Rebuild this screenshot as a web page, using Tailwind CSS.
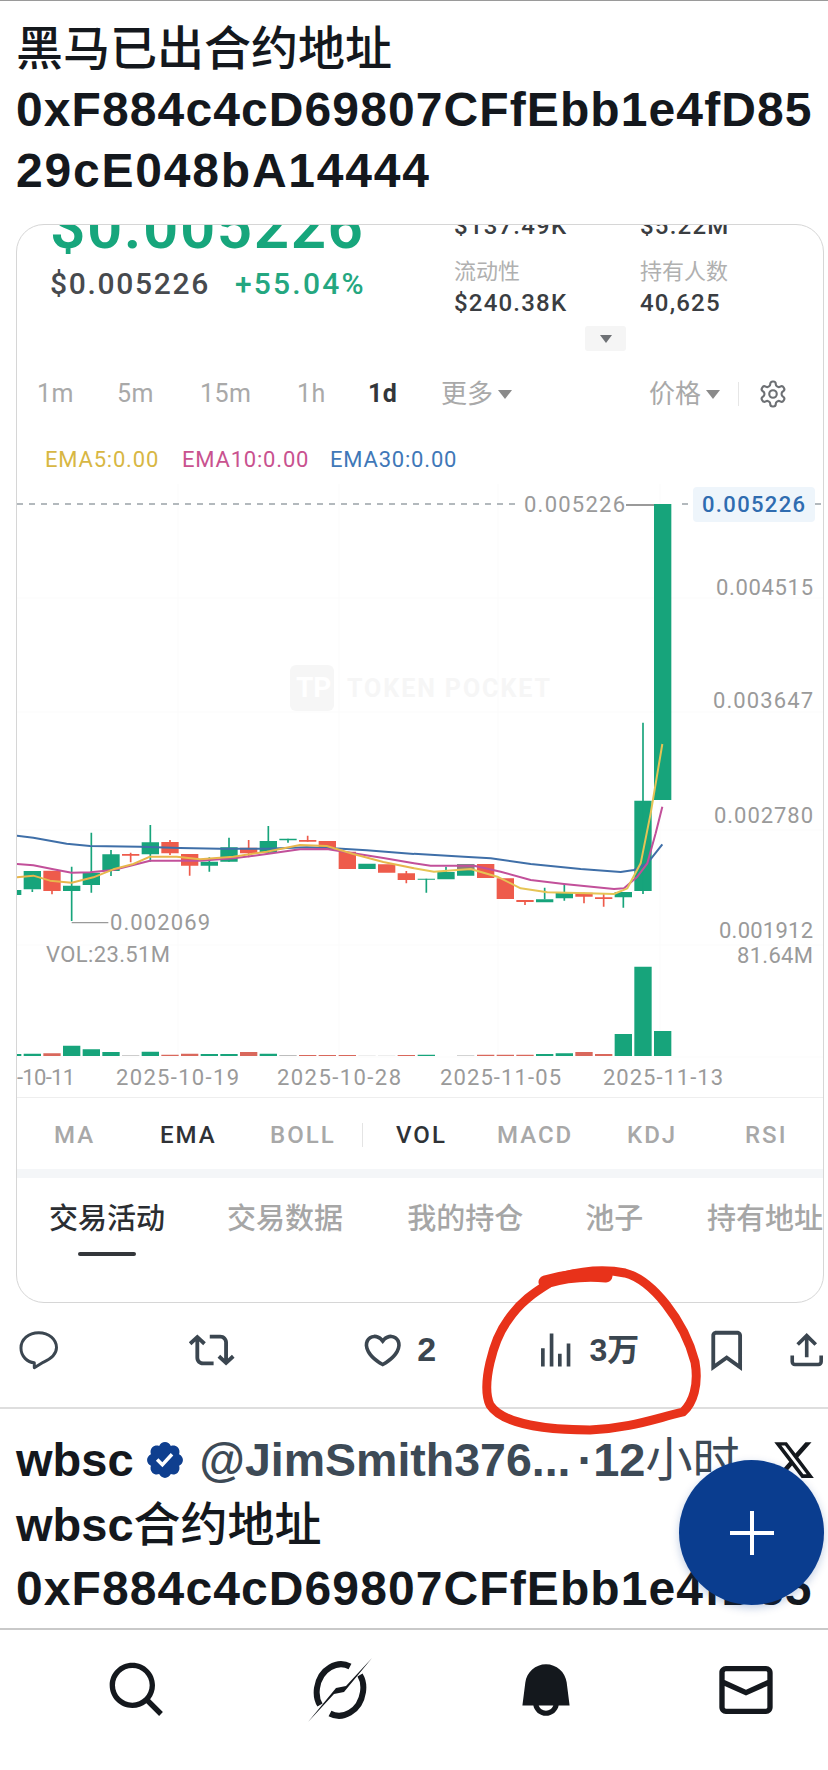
<!DOCTYPE html>
<html lang="zh-CN">
<head>
<meta charset="utf-8">
<title>Tweet screenshot</title>
<script src="https://cdn.jsdelivr.net/npm/@tailwindcss/browser@4"></script>
</head>
<body class="m-0 bg-white">
<div class="relative w-[828px] h-[1770px] overflow-hidden bg-white text-[#14181d] font-['Roboto','Noto_Sans_CJK_SC',sans-serif]">
  <div class="h-px bg-[#9a9a9a]"></div>

  <!-- tweet text -->
  <div class="pl-[16px] pt-[17px] h-[223px] font-['Liberation_Sans','Noto_Sans_CJK_SC',sans-serif] font-bold text-[48px] leading-[61px] tracking-[1.1px]">
    <div class="font-medium text-[47px] tracking-[0px]">黑马已出合约地址</div>
    <div class="whitespace-nowrap">0xF884c4cD69807CFfEbb1e4fD85</div>
    <div class="whitespace-nowrap tracking-[1.8px]">29cE048bA14444</div>
  </div>

  <!-- embedded card -->
  <div class="ml-[16px] w-[808px] h-[1079px] box-border border border-[#d6d6d6] rounded-[28px] overflow-hidden">
    <div class="flex h-[145px]">
      <div class="w-[437px] pl-[33px]">
        <div class="text-[62px] leading-[62px] -mt-[29px] font-semibold text-[#17a67c] tracking-[1.5px] whitespace-nowrap">$0.005226</div>
        <div class="flex mt-[8px] text-[30px] leading-[36px] font-medium tracking-[1.7px]">
          <span class="text-[#474a4e] w-[185px]">$0.005226</span>
          <span class="text-[#24a780] tracking-[2.2px]">+55.04%</span>
        </div>
      </div>
      <div class="relative w-[369px]">
        <div class="grid grid-cols-[186px_160px] text-[24px] font-medium text-[#3a3d41] -mt-[12px] tracking-[1.2px]">
          <div class="leading-[26px]">$137.49K</div>
          <div class="leading-[26px]">$5.22M</div>
          <div class="mt-[18px] leading-[30px] text-[22px] tracking-[0px] text-[#b0b0b0] font-normal">流动性</div>
          <div class="mt-[18px] leading-[30px] text-[22px] tracking-[0px] text-[#b0b0b0] font-normal">持有人数</div>
          <div class="mt-[2px] leading-[28px]">$240.38K</div>
          <div class="mt-[2px] leading-[28px]">40,625</div>
        </div>
        <div class="flex items-center justify-center w-[41px] h-[25px] ml-[131px] mt-[9px] bg-[#f5f5f5] rounded-[3px]">
          <svg width="12" height="8" viewBox="0 0 12 8"><path d="M0 0h12L6 8z" fill="#6e7175"/></svg>
        </div>
      </div>
    </div>

    <!-- time frames -->
    <div class="flex items-center h-[46px] pt-[2px] text-[25px] tracking-[0.5px] text-[#a9a9a9]">
      <span class="ml-[20px] w-[80px]">1m</span>
      <span class="w-[83px]">5m</span>
      <span class="w-[97px]">15m</span>
      <span class="w-[71px]">1h</span>
      <span class="w-[73px] font-bold text-[#33363a]">1d</span>
      <span class="flex items-center w-[208px] text-[26px] tracking-[0px]">更多<svg class="ml-[5px]" width="14" height="9" viewBox="0 0 14 9"><path d="M0 0h14L7 9z" fill="#8a8a8a"/></svg></span>
      <span class="flex items-center w-[89px] text-[26px] tracking-[0px]">价格<svg class="ml-[5px]" width="14" height="9" viewBox="0 0 14 9"><path d="M0 0h14L7 9z" fill="#8a8a8a"/></svg></span>
      <span class="w-px h-[24px] bg-[#e6e6e6] mr-[19px]"></span>
      <svg width="30" height="32" viewBox="0 0 24 24" fill="none" stroke="#6d7074" stroke-width="1.7" stroke-linecap="round" stroke-linejoin="round"><path d="M12.22 2h-.44a2 2 0 0 0-2 2v.18a2 2 0 0 1-1 1.73l-.43.25a2 2 0 0 1-2 0l-.15-.08a2 2 0 0 0-2.73.73l-.22.38a2 2 0 0 0 .73 2.73l.15.1a2 2 0 0 1 1 1.72v.51a2 2 0 0 1-1 1.74l-.15.09a2 2 0 0 0-.73 2.73l.22.38a2 2 0 0 0 2.73.73l.15-.08a2 2 0 0 1 2 0l.43.25a2 2 0 0 1 1 1.73V20a2 2 0 0 0 2 2h.44a2 2 0 0 0 2-2v-.18a2 2 0 0 1 1-1.73l.43-.25a2 2 0 0 1 2 0l.15.08a2 2 0 0 0 2.73-.73l.22-.39a2 2 0 0 0-.73-2.73l-.15-.08a2 2 0 0 1-1-1.74v-.5a2 2 0 0 1 1-1.74l.15-.09a2 2 0 0 0 .73-2.73l-.22-.38a2 2 0 0 0-2.73-.73l-.15.08a2 2 0 0 1-2 0l-.43-.25a2 2 0 0 1-1-1.73V4a2 2 0 0 0-2-2z"/><circle cx="12" cy="12" r="3"/></svg>
    </div>

    <!-- EMA legend -->
    <div class="flex items-center h-[68px] pt-[18px] text-[22px] tracking-[0.8px] whitespace-nowrap">
      <span class="ml-[28px] w-[137px] text-[#d8b743]">EMA5:0.00</span>
      <span class="w-[148px] text-[#c9528f]">EMA10:0.00</span>
      <span class="text-[#3f78b8]">EMA30:0.00</span>
    </div>

    <!-- chart -->
    <svg class="block" width="806" height="613" viewBox="17 484 806 613" font-size="22" fill="#9a9a9a">
      <g stroke="#fbfbfb" stroke-width="1">
        <path d="M17 598H823M17 712H823M17 830H823M17 945H823M17 1057H823M178 484V1057M339 484V1057M498 484V1057M660 484V1057"/>
      </g>
      <path d="M17 504H520M682 504H693M815 504H823" stroke="#b3b9bd" stroke-width="2" stroke-dasharray="6 6"/>
      <path d="M626 505H654" stroke="#9a9a9a" stroke-width="2"/>
      <text x="524" y="512" textLength="101">0.005226</text>
      <rect x="693" y="487" width="122" height="35" rx="4" fill="#eef5fb"/>
      <text x="702" y="512" textLength="103" fill="#2f6cb0" font-weight="500">0.005226</text>
      <text x="716" y="595" textLength="97">0.004515</text>
      <text x="713" y="708" textLength="100">0.003647</text>
      <text x="714" y="823" textLength="99">0.002780</text>
      <text x="719" y="938" textLength="94">0.001912</text>
      <text x="737" y="963" textLength="76">81.64M</text>
      <!-- watermark -->
      <rect x="290" y="665" width="44" height="46" rx="6" fill="#f6f6f6"/>
      <text x="296" y="697" font-size="28" font-weight="700" fill="#fff">TP</text>
      <text x="347" y="697" font-size="25" font-weight="700" fill="#f6f6f6" textLength="203">TOKEN POCKET</text>

      <!-- left half candles -->
      <g transform="translate(0 740) scale(.33333)">
        <path fill="#17a47b" d="M48 450h16v15h-16zM71 393h52v55h-52zM189 437h52v16h-52zM248 398h52v37h-52zM307 343h52v50h-52zM425 307h52v36h-52zM602 365h52v12h-52zM661 322h52v43h-52zM779 303h52v35h-52zM838 296h52v5h-52zM1075 371h52v16h-52z"/>
        <path fill="#ee5b4b" d="M130 392h52v61h-52zM366 342h52v5h-52zM484 306h52v34h-52zM543 342h52v35h-52zM720 323h52v17h-52zM897 300h52v5h-52zM956 303h52v22h-52zM1016 335h52v52h-52zM1134 373h52v25h-52zM1193 400h52v20h-52z"/>
        <path stroke="#17a47b" stroke-width="5" d="M97 448V456M215 380V543M274 278V458M333 330V408M451 255V365M628 352V395M687 293V365M805 258V340M864 296V308"/>
        <path stroke="#ee5b4b" stroke-width="5" d="M156 453V463M392 338V367M510 300V345M569 342V407M746 300V352M923 287V305M1219 393V430"/>
        <path fill="none" stroke="#3f6fa8" stroke-width="6" stroke-linejoin="round" d="M48 287L100 293 200 311 270 318 420 320 540 324 660 326 800 326 920 322 1000 325 1100 331 1242 342"/>
        <path fill="none" stroke="#c2509a" stroke-width="6" stroke-linejoin="round" d="M48 372L100 376 160 388 215 398 270 397 340 390 400 375 450 362 520 362 600 362 700 355 800 342 900 328 980 327 1060 340 1150 354 1242 370"/>
        <path fill="none" stroke="#e8b64c" stroke-width="6" stroke-linejoin="round" d="M48 412L100 407 150 422 215 428 280 412 340 388 400 372 450 350 530 350 600 358 700 350 800 335 900 315 980 318 1060 342 1150 366 1242 385"/>
        <path fill="#17a47b" d="M48 942h16v6h-16zM71 941h52v7h-52zM189 917h52v31h-52zM248 928h52v20h-52zM307 936h52v12h-52zM425 935h52v13h-52zM602 942h52v6h-52zM661 942h52v6h-52zM779 941h52v7h-52z"/>
        <path fill="#d9685c" d="M130 940h52v8h-52zM484 944h52v4h-52zM543 941h52v7h-52zM720 936h52v12h-52zM897 945h52v3h-52zM956 945h52v3h-52zM1016 945h52v3h-52zM1193 945h52v3h-52z"/>
        <path fill="#bdbdbd" d="M366 946h52v2h-52zM838 945h52v3h-52zM1075 947h52v1h-52zM1134 947h52v1h-52z"/>
        <path fill="none" stroke="#9a9a9a" stroke-width="4" d="M215 548H325"/>
      </g>
      <!-- right half candles -->
      <g transform="translate(414 700) scale(.33333)">
        <path fill="#17a47b" d="M11 536h52v3h-52zM70 516h52v22h-52zM129 493h52v34h-52zM366 598h52v9h-52zM425 578h52v17h-52zM602 576h52v16h-52zM661 302h52v271h-52zM720 -588h52v888h-52z"/>
        <path fill="#8f7d7a" d="M129 493h52v18h-52z"/>
        <path fill="#ee5b4b" d="M189 492h52v42h-52zM248 535h52v62h-52zM307 600h52v6h-52zM484 578h52v12h-52zM543 592h52v5h-52z"/>
        <path stroke="#17a47b" stroke-width="5" d="M37 536V578M96 500V516M392 563V598M451 552V602M628 576V623M687 68V582"/>
        <path stroke="#ee5b4b" stroke-width="5" d="M333 600V615M510 578V610M569 580V620"/>
        <path fill="none" stroke="#3f6fa8" stroke-width="6" stroke-linejoin="round" d="M0 461L150 470 230 475 350 492 500 507 620 516 660 510 700 490 745 433"/>
        <path fill="none" stroke="#c2509a" stroke-width="6" stroke-linejoin="round" d="M0 490L50 497 180 497 260 515 350 540 450 552 600 567 630 565 670 530 700 490 725 400 745 320"/>
        <path fill="none" stroke="#e6c455" stroke-width="6" stroke-linejoin="round" d="M0 505L60 515 170 507 250 530 320 565 400 577 520 580 600 582 640 565 680 490 710 340 745 132"/>
        <path fill="#17a47b" d="M11 1064h52v4h-52zM366 1062h52v6h-52zM425 1060h52v8h-52zM602 1002h52v66h-52zM661 800h52v268h-52zM720 993h52v75h-52z"/>
        <path fill="#d9685c" d="M189 1064h52v4h-52zM248 1064h52v4h-52zM307 1064h52v4h-52zM484 1056h52v12h-52zM543 1062h52v6h-52z"/>
        <path fill="#bdbdbd" d="M129 1066h52v2h-52z"/>
      </g>
      <text x="110" y="930" textLength="100">0.002069</text>
      <text x="46" y="962" textLength="124">VOL:23.51M</text>
      <text x="17" y="1085" textLength="58">-10-11</text>
      <text x="116" y="1085" textLength="123">2025-10-19</text>
      <text x="277" y="1085" textLength="124">2025-10-28</text>
      <text x="440" y="1085" textLength="121">2025-11-05</text>
      <text x="603" y="1085" textLength="120">2025-11-13</text>
    </svg>

    <!-- indicators -->
    <div class="flex items-center h-[72px] pt-[2px] border-t border-[#eeeeee] text-[24px] tracking-[2px] font-medium text-[#a8a8a8] whitespace-nowrap">
      <span class="ml-[37px] w-[106px]">MA</span>
      <span class="w-[110px] text-[#2f3236]">EMA</span>
      <span class="w-[92px]">BOLL</span>
      <span class="w-px h-[24px] bg-[#e4e4e4] mr-[33px]"></span>
      <span class="w-[101px] text-[#2f3236]">VOL</span>
      <span class="w-[130px]">MACD</span>
      <span class="w-[118px]">KDJ</span>
      <span>RSI</span>
    </div>
    <div class="h-[9px] bg-[#f4f6f8]"></div>

    <!-- tabs -->
    <div class="relative flex items-start pt-[21px] text-[29px] leading-[40px] font-medium text-[#a6a6a6] whitespace-nowrap">
      <span class="ml-[32px] w-[180px] text-[#2b2e32]">交易活动</span>
      <span class="w-[182px]">交易数据</span>
      <span class="w-[180px]">我的持仓</span>
      <span class="w-[123px]">池子</span>
      <span>持有地址</span>
      <span class="absolute left-[61px] top-[74px] w-[58px] h-[4px] rounded-full bg-[#33363a]"></span>
    </div>
  </div>

  <!-- action row -->
  <div class="flex items-center h-[104px] pb-[11px] text-[#3b4650] font-['Liberation_Sans','Noto_Sans_CJK_SC',sans-serif] font-bold text-[34px]">
    <svg class="ml-[19px]" width="40" height="40" viewBox="0 0 40 40" fill="none" stroke="#3b4650" stroke-width="3" stroke-linejoin="round"><path d="M20 2.5C9.5 2.5 2 9.500 2 18c0 8.500 6.500 14.500 13.500 15v5l9-5.500c8-3.500 13.500-8 13.500-15C38 9.500 30.500 2.500 20 2.500z"/></svg>
    <svg class="ml-[130px]" width="48" height="46" viewBox="0 0 24 24" fill="#3b4650"><path d="M4.500 3.880l4.432 4.140-1.364 1.460L5.500 7.550V16c0 1.100.896 2 2 2H13v2H7.500c-2.209 0-4-1.790-4-4V7.550L1.432 9.480.068 8.020 4.500 3.880zM16.500 6H11V4h5.500c2.209 0 4 1.790 4 4v8.450l2.068-1.930 1.364 1.460-4.432 4.140-4.432-4.140 1.364-1.460 2.068 1.930V8c0-1.100-.896-2-2-2z"/></svg>
    <svg class="ml-[125px]" width="44" height="44" viewBox="0 0 24 24" fill="#3b4650"><path d="M16.697 5.500c-1.222-.06-2.679.51-3.890 2.160l-.805 1.090-.806-1.090C9.984 6.010 8.526 5.440 7.304 5.500c-1.243.07-2.349.78-2.910 1.910-.552 1.120-.633 2.780.479 4.820 1.074 1.970 3.257 4.270 7.129 6.610 3.870-2.340 6.052-4.640 7.126-6.610 1.111-2.040 1.030-3.700.477-4.820-.561-1.130-1.666-1.840-2.908-1.910zm4.187 7.690c-1.351 2.480-4.001 5.120-8.379 7.670l-.503.300-.504-.300c-4.379-2.550-7.029-5.190-8.382-7.670-1.360-2.500-1.410-4.860-.514-6.670.887-1.790 2.647-2.910 4.601-3.010 1.651-.09 3.368.56 4.798 2.010 1.429-1.450 3.146-2.100 4.796-2.010 1.954.1 3.714 1.220 4.601 3.010.896 1.810.846 4.170-.514 6.670z"/></svg>
    <span class="ml-[13px] w-[20px]">2</span>
    <svg class="ml-[96px]" width="46" height="44" viewBox="0 0 24 24" fill="#3b4650"><path d="M8.750 21V3h2v18h-2zM18 21V8.500h2V21h-2zM4 21l.004-10h2L6 21H4zm9.248 0v-7h2v7h-2z"/></svg>
    <span class="ml-[11px] w-[50px] text-[32px] whitespace-nowrap">3万</span>
    <svg class="ml-[64px]" width="48" height="46" viewBox="0 0 24 24" fill="#3b4650"><path d="M4 4.500C4 3.120 5.119 2 6.500 2h11C18.881 2 20 3.120 20 4.500v18.440l-8-5.710-8 5.710V4.500zM6.500 4c-.276 0-.5.220-.5.500v14.560l6-4.290 6 4.290V4.500c0-.280-.224-.500-.500-.500h-11z"/></svg>
    <svg class="ml-[34px]" width="44" height="46" viewBox="0 0 24 24" fill="#3b4650"><path d="M12 2.590l5.700 5.700-1.410 1.420L13 6.410V16h-2V6.410l-3.300 3.300-1.410-1.420L12 2.590zM21 15l-.02 3.510c0 1.380-1.120 2.490-2.500 2.490H5.500C4.110 21 3 19.880 3 18.500V15h2v3.500c0 .280.220.500.500.500h12.980c.280 0 .500-.220.500-.500L19 15h2z"/></svg>
  </div>
  <div class="h-[2px] bg-[#dedede]"></div>

  <!-- second tweet -->
  <div class="h-[219px] pl-[16px] pt-[19px] font-['Liberation_Sans','Noto_Sans_CJK_SC',sans-serif] font-bold text-[48px] leading-[64px] tracking-[1.1px] whitespace-nowrap overflow-hidden">
    <div class="flex items-center h-[64px]">
      <span class="tracking-[0px] text-[47px]">wbsc</span>
      <svg class="ml-[10px]" width="42" height="44" viewBox="0 0 24 24"><path fill="#fff" d="M6 7h12v10H6z"/><path fill="#0f3f8f" d="M22.250 12c0-1.430-.88-2.670-2.190-3.340.46-1.390.2-2.900-.81-3.910s-2.520-1.270-3.910-.81c-.66-1.310-1.910-2.190-3.340-2.190s-2.670.88-3.330 2.190c-1.400-.46-2.910-.2-3.920.81s-1.260 2.520-.8 3.910c-1.310.67-2.200 1.910-2.200 3.340s.89 2.670 2.200 3.340c-.46 1.390-.21 2.900.8 3.910s2.520 1.260 3.910.81c.67 1.310 1.910 2.190 3.340 2.190s2.680-.88 3.340-2.190c1.390.45 2.900.2 3.910-.81s1.270-2.520.81-3.910c1.310-.67 2.190-1.910 2.190-3.340zm-11.710 4.200L6.800 12.460l1.410-1.420 2.260 2.260 4.800-5.230 1.470 1.360-6.200 6.770z"/></svg>
      <span class="ml-[14px] text-[#3d4a56] text-[46.5px] tracking-[0px]">@JimSmith376...</span>
      <span class="ml-[7px] text-[#3d4a56] text-[47px] tracking-[0px]">·12<span class="font-normal">小时</span></span>
      <svg class="ml-[33px]" width="44" height="48" viewBox="0 0 24 24" fill="#14181d"><path d="M18.244 2.250h3.308l-7.227 8.260 8.502 11.240H16.170l-5.214-6.817L4.990 21.750H1.680l7.730-8.835L1.254 2.250H8.080l4.713 6.231zm-1.161 17.520h1.833L7.084 4.126H5.117z"/></svg>
    </div>
    <div class="tracking-[0px] leading-[65px] text-[47px]">wbsc<span class="font-medium">合约地址</span></div>
    <div>0xF884c4cD69807CFfEbb1e4fD85</div>
  </div>
  <div class="h-[2px] bg-[#c9c9c9]"></div>

  <!-- bottom nav -->
  <div class="relative flex items-center h-[120px]">
    <svg class="ml-[105px]" width="64" height="64" viewBox="0 0 24 24" fill="#14181d"><path d="M10.250 3.750c-3.590 0-6.500 2.910-6.500 6.500s2.910 6.500 6.500 6.500c1.795 0 3.419-.726 4.596-1.904 1.178-1.177 1.904-2.801 1.904-4.596 0-3.590-2.910-6.500-6.500-6.500zm-8.500 6.500c0-4.694 3.806-8.500 8.500-8.500s8.500 3.806 8.500 8.500c0 1.986-.682 3.815-1.824 5.262l4.781 4.781-1.414 1.414-4.781-4.781c-1.447 1.142-3.276 1.824-5.262 1.824-4.694 0-8.500-3.806-8.500-8.500z"/></svg>
    <svg class="ml-[139px]" width="64" height="64" viewBox="0 0 64 64" fill="none"><path d="M42 8.500C30 2 12 10 9 30c-1 7 .5 13 3 17M22 55.500C34 62 52 54 55 34c1-7-.5-13-3-17" stroke="#14181d" stroke-width="6"/><path d="M64 0L36 34 26 36 0 64 28 30 38 28z" fill="#14181d"/></svg>
    <svg class="ml-[143px]" width="62" height="62" viewBox="0 0 24 24" fill="#14181d"><path d="M11.996 2c-4.062 0-7.490 3.021-7.999 7.051L2.866 18H7.100c.463 2.282 2.481 4 4.900 4s4.437-1.718 4.900-4h4.236l-1.143-8.958C19.480 5.017 16.054 2 11.996 2zM9.171 18h5.658c-.412 1.165-1.523 2-2.829 2s-2.417-.835-2.829-2z"/></svg>
    <svg class="ml-[137px]" width="64" height="64" viewBox="0 0 24 24" fill="#14181d"><path d="M1.998 5.500c0-1.381 1.119-2.500 2.500-2.500h15c1.381 0 2.500 1.119 2.500 2.500v13c0 1.381-1.119 2.500-2.500 2.500h-15c-1.381 0-2.500-1.119-2.500-2.500v-13zm2.500-.5c-.276 0-.5.224-.5.500v2.764l8 3.638 8-3.636V5.500c0-.276-.224-.5-.5-.5h-15zm15.500 5.463l-8 3.636-8-3.638V18.500c0 .276.224.5.5.500h15c.276 0 .5-.224.5-.5v-8.037z"/></svg>
  </div>

  <!-- floating compose button -->
  <div class="absolute left-[679px] top-[1460px] w-[145px] h-[145px] rounded-full bg-[#0a3d8f] flex items-center justify-center shadow-[0_3px_8px_rgba(10,61,143,0.25)]">
    <svg width="44" height="44" viewBox="0 0 44 44"><path d="M22 0V44M0 22H44" stroke="#fff" stroke-width="4"/></svg>
  </div>

  <!-- hand-drawn red circle -->
  <svg class="absolute left-0 top-0 pointer-events-none" width="828" height="1770" viewBox="0 0 828 1770" fill="none">
    <path d="M545 1284C565 1272 600 1268 625 1273C652 1280 684 1320 695 1362C699 1385 693 1403 683 1412C650 1420 630 1428 590 1430C550 1430 503 1425 490 1405C481 1385 493 1340 508 1320C520 1302 535 1292 548 1284" stroke="#e8321a" stroke-width="9" stroke-linecap="round" stroke-linejoin="round"/>
    <path d="M545 1282C565 1276 585 1274 606 1276" stroke="#e8321a" stroke-width="13" stroke-linecap="round"/>
  </svg>
</div>
</body>
</html>
